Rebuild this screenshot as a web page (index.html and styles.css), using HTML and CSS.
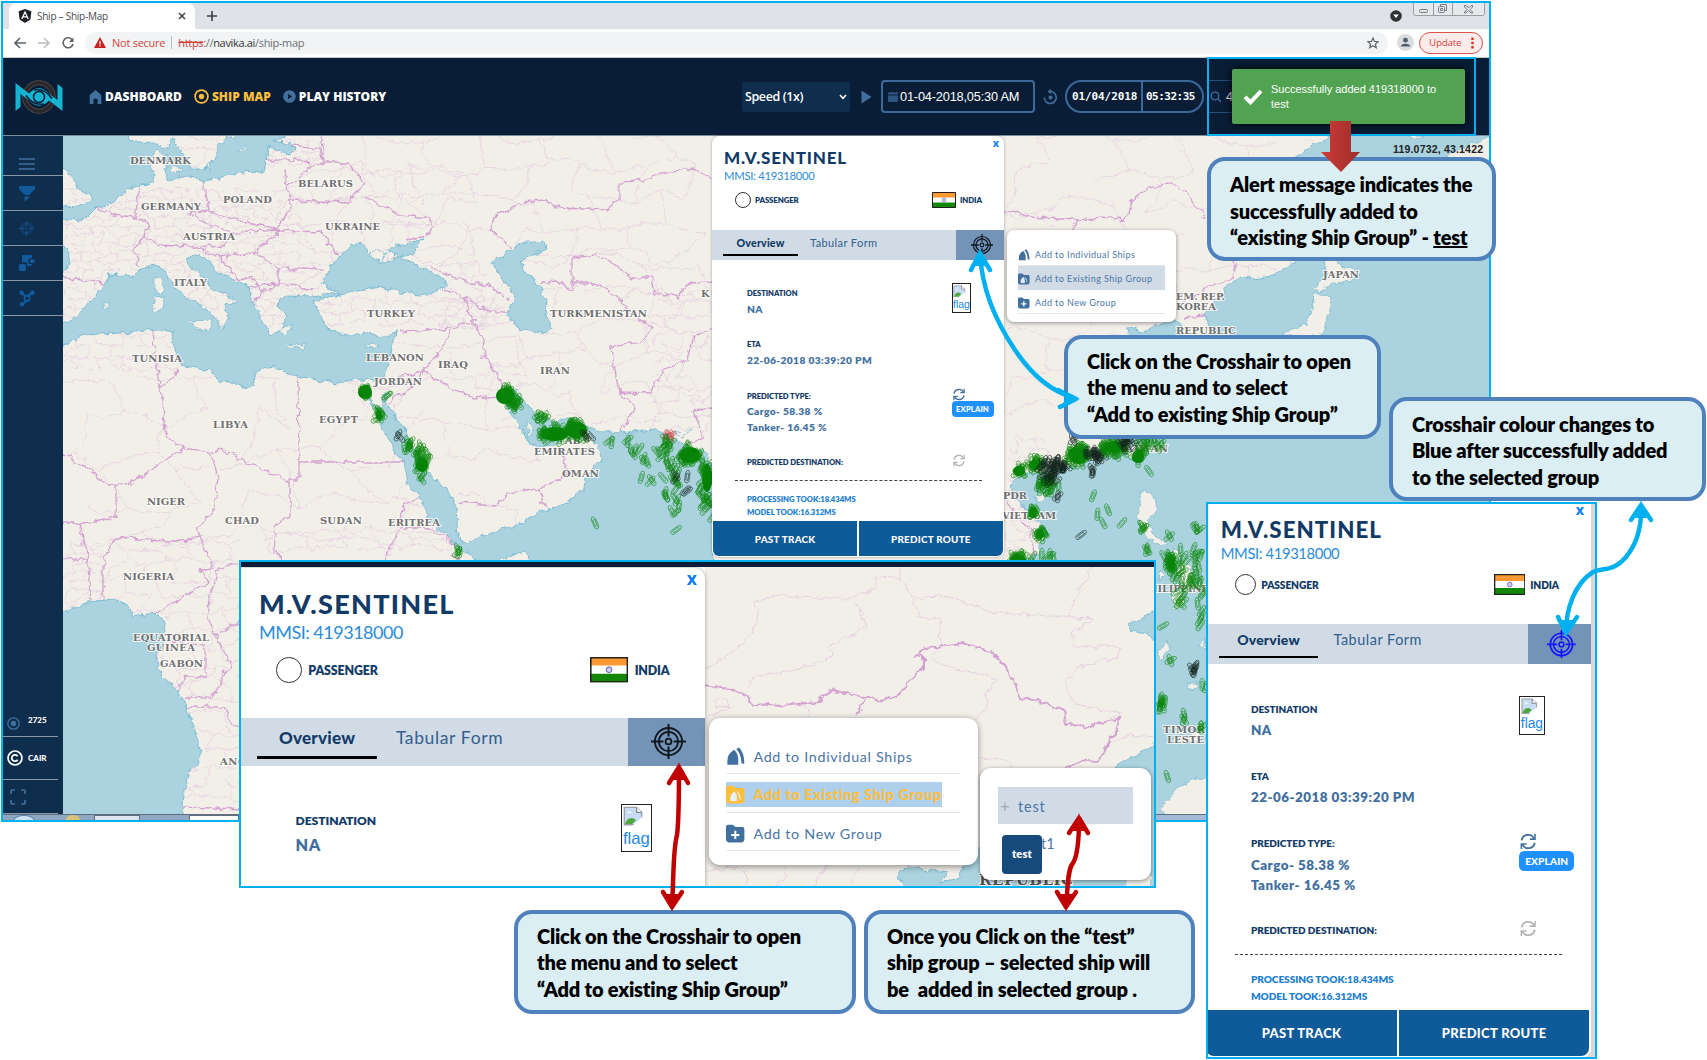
FILE: index.html
```html
<!DOCTYPE html>
<html lang="en">
<head>
<meta charset="utf-8">
<title>Ship – Ship-Map</title>
<link rel="stylesheet" href="styles.css">
</head>
<body>
<svg width="0" height="0" class="defs" aria-hidden="true">
  <defs>
    <filter id="rough" x="0" y="0" width="100%" height="100%"><feTurbulence type="fractalNoise" baseFrequency="0.12" numOctaves="3" seed="4"/><feDisplacementMap in="SourceGraphic" scale="8" xChannelSelector="R" yChannelSelector="G"/></filter>
    <path id="ship" d="M-2.6 -4.5 L-1 -7.5 H1 L2.6 -4.5 V5 L1.4 7 H-1.4 L-2.6 5Z M-1.2 -4 H1.2 V4 H-1.2Z"/>
    <symbol id="crosshair" viewBox="0 0 24 24"><g fill="none" stroke="currentColor" stroke-width="1.3"><circle cx="12" cy="12" r="9.3"/><circle cx="12" cy="12" r="6.6"/><circle cx="12" cy="12" r="2"/><path d="M12 0V8.5M12 15.5V24M0 12H8.5M15.5 12H24" stroke-width="1.4"/></g></symbol>
    <symbol id="refresh" viewBox="0 0 14 14"><g fill="none" stroke="currentColor" stroke-width="1.5"><path d="M1.6 6A5.4 5.4 0 0 1 11.8 4.6M12.4 8A5.4 5.4 0 0 1 2.2 9.4"/><path d="M12.6 .8V5H8.4M1.4 13.2V9H5.6" stroke-width="1.3"/></g></symbol>
    <symbol id="india" viewBox="0 0 24 16"><path fill="#fff" d="M0 0H24V16H0Z"/><path fill="#ff9933" d="M0 0H24V5.4H0Z"/><path fill="#138808" d="M0 10.6H24V16H0Z"/><circle cx="12" cy="8" r="1.8" fill="#ccccf0" stroke="#5a5ab0" stroke-width=".6"/><path d="M.5 .5H23.5V15.5H.5Z" fill="none" stroke="#222"/></symbol>
    <symbol id="broken" viewBox="0 0 16 16"><path d="M1 1H10.5L14.5 5V14.5H1Z" fill="#c9dcf5" stroke="#9aa0a6"/><path d="M10.5 1V5H14.5" fill="#fff" stroke="#888"/><path d="M1.5 14C3 9 7 8 10 11L7 14Z" fill="#4ea83c"/><path d="M7 15.5L15.5 8V15.5Z" fill="#fff"/><path d="M3 5.5Q5 3 7 5.5Z" fill="#fff"/></symbol>
    <symbol id="ships" viewBox="0 0 14 14"><path d="M1 13V10Q1 5 6 2Q9 5 9 9V13Z"/><path d="M7.5 1.5Q11 5 11.4 12L13.4 12.4Q13.5 4 9.6 .4Z"/></symbol>
    <symbol id="folder-ships" viewBox="0 0 14 14"><path d="M0 2Q0 .5 1.5 .5H5L7 2.2H12Q13.5 2.2 13.5 4V11Q13.5 13.5 11 13.5H2.5Q0 13.5 0 11Z"/><path d="M3.4 11.5V9Q4 6.500 6 5Q7.800 6.500 7.800 9V11.500ZM8 4.600Q10.600 7 10.600 11" fill="#e9eff6" stroke="#e9eff6" stroke-width=".6"/></symbol>
    <symbol id="folder-plus" viewBox="0 0 14 14"><path d="M0 2Q0 .5 1.5 .5H5L7 2.2H12Q13.5 2.2 13.5 4V11Q13.5 13.5 11 13.5H2.5Q0 13.5 0 11Z"/><path d="M6.8 5V11M3.8 8H9.8" stroke="#fff" stroke-width="1.5"/></symbol>
  </defs>
</svg>

<main class="board">
  <section class="window browser">
    <div class="tabs">
      <div class="tab">
        <svg width="14" height="14" viewBox="0 0 14 14"><path d="M7 0L13.4 2.3L12.4 10.6L7 14L1.6 10.6L.6 2.3Z" fill="#1c1f24"/><path d="M3.8 10L7 3L10.2 10M5 7.8H9" fill="none" stroke="#fff" stroke-width="1.3"/></svg>
        <span>Ship – Ship-Map</span>
        <svg width="8" height="8" viewBox="0 0 8 8"><path d="M1 1L7 7M7 1L1 7" stroke="#3c4043" stroke-width="1.5"/></svg>
      </div>
      <svg class="plus" width="10" height="10" viewBox="0 0 10 10"><path d="M5 0V10M0 5H10" stroke="#3c4043" stroke-width="1.6"/></svg>
      <svg class="guest" width="12" height="12" viewBox="0 0 12 12"><circle cx="6" cy="6" r="5.8" fill="#303134"/><path d="M3.2 4.5H8.8L6 8Z" fill="#fff"/></svg>
      <svg class="winctl" width="72" height="13" viewBox="0 0 72 13"><path d="M.5 0V10.5Q.5 12.5 2.5 12.5H69.5Q71.5 12.5 71.5 10.5V0M20.5 0V12.5M39.5 0V12.5" fill="#e6e8ec" stroke="#9a9da3"/><g fill="none" stroke="#777b82"><rect x="6.500" y="6.500" width="8" height="3" rx="1"/><rect x="25.500" y="3.500" width="6" height="6" rx="1"/><path d="M27.500 3V1.500H33.500V7.500H32M27.500 5.500H29.500V7.500H27.500Z"/><path d="M51.500 2.500L53 2.500L55.500 5L58 2.500H59.500V4L57 6.500L59.500 9V10H58L55.500 7.500L53 10H51.500V9L54 6.500L51.500 4Z"/></g></svg>
    </div>
    <div class="toolbar">
      <svg width="12" height="12" viewBox="0 0 12 12"><path d="M12 6H1.500M6 1L1 6L6 11" fill="none" stroke="#5f6368" stroke-width="1.600"/></svg>
      <svg width="12" height="12" viewBox="0 0 12 12"><path d="M0 6H10.500M6 1L11 6L6 11" fill="none" stroke="#babcbe" stroke-width="1.500"/></svg>
      <svg width="12" height="12" viewBox="0 0 12 12"><path d="M10.300 3A5 5 0 1 0 11 7" fill="none" stroke="#5f6368" stroke-width="1.600"/><path d="M11.500 .5V5H7Z" fill="#5f6368"/></svg>
      <div class="omnibox">
        <svg width="12" height="11" viewBox="0 0 12 11"><path d="M6 0L12 11H0Z" fill="#c5221f"/><path d="M6 4V7.500M6 8.300V9.600" stroke="#fff" stroke-width="1.200"/></svg>
        <span class="warn">Not secure</span>
        <span class="url"><s>https</s>://<b>navika.ai</b>/ship-map</span>
        <svg class="star" width="12" height="12" viewBox="0 0 12 12"><path d="M6 1L7.500 4.400L11.200 4.700L8.400 7.100L9.300 10.800L6 8.800L2.700 10.800L3.600 7.100L.8 4.700L4.500 4.400Z" fill="none" stroke="#5f6368" stroke-width="1.200"/></svg>
      </div>
      <svg class="profile" width="17" height="17" viewBox="0 0 17 17"><circle cx="8.500" cy="8.500" r="8.500" fill="#dadce0"/><circle cx="8.500" cy="6.200" r="2.400" fill="#505a6b"/><path d="M3.800 12.600Q4 9.700 8.500 9.700Q13 9.700 13.200 12.600Z" fill="#505a6b"/></svg>
      <div class="update"><span>Update</span><svg width="3" height="12" viewBox="0 0 3 12"><path d="M.3 .5H2.700V2.900H.3ZM.3 4.800H2.700V7.200H.3ZM.3 9.100H2.700V11.500H.3Z" fill="#d93025"/></svg></div>
    </div>

    <header class="appbar">
      <svg class="logo" width="48" height="34" viewBox="0 0 48 34"><g fill="none"><circle cx="24" cy="17" r="14.200" stroke="#57514f" stroke-width="5"/><circle cx="24" cy="17" r="14.200" stroke="#2b2729" stroke-width="3.600"/></g><path d="M.5 3L14 13.500Q24 3 34.500 14L42.500 20V4L47.500 8V31L34 20.500Q24 31 13.500 20L5.500 14V27L.5 31Z" fill="#14b4d2"/><path d="M11 15.500Q18 26 29 24M37 18.500Q30 8 19 10" fill="none" stroke="#091e36" stroke-width="1.500"/><circle cx="24" cy="17" r="5.500" fill="none" stroke="#091e36" stroke-width="1.500"/><circle cx="24" cy="17" r="2.800" fill="#14b4d2"/></svg>
      <nav>
        <a><svg width="13" height="14" viewBox="0 0 13 14"><path d="M6.500 0L12.300 5V14H8.600V9.500Q6.500 7.500 4.400 9.500V14H.7V5Z" fill="#41709f"/></svg><span>DASHBOARD</span></a>
        <a class="on"><svg width="15" height="15" viewBox="0 0 15 15"><circle cx="7.500" cy="7.500" r="6.400" fill="none" stroke="#fdbe3c" stroke-width="1.700"/><circle cx="7.500" cy="7.500" r="2.700" fill="#fdbe3c"/></svg><span>SHIP MAP</span></a>
        <a><svg width="13" height="13" viewBox="0 0 13 13"><circle cx="6.500" cy="6.500" r="6.300" fill="#41709f"/><path d="M5 3.700L9.200 6.500L5 9.300Z" fill="#091e36"/></svg><span>PLAY HISTORY</span></a>
      </nav>
      <div class="speed"><span>Speed (1x)</span><svg width="8" height="6" viewBox="0 0 8 6"><path d="M1 1L4 4.300L7 1" fill="none" stroke="#fff" stroke-width="1.600"/></svg></div>
      <svg class="play" width="11" height="14" viewBox="0 0 11 14"><path d="M.5 .5L10.500 7L.5 13.500Z" fill="#41709f"/></svg>
      <div class="date"><svg width="10" height="11" viewBox="0 0 10 11"><rect y="1" width="10" height="10" rx="1.500" fill="#2d5581"/><path d="M0 4H10M3 0V2M7 0V2" stroke="#091e36"/></svg><span>01-04-2018,05:30 AM</span></div>
      <svg class="history" width="15" height="16" viewBox="0 0 15 16"><path d="M6.500 2.500A6 6 0 1 1 1.300 8.500" fill="none" stroke="#41709f" stroke-width="1.600"/><path d="M8 0V5L4.500 2.500Z" fill="#41709f"/><circle cx="7.500" cy="8.500" r="2" fill="#41709f"/></svg>
      <div class="clock"><span>01/04/2018</span><span>05:32:35</span></div>
      <div class="search"><svg width="12" height="12" viewBox="0 0 12 12"><circle cx="5" cy="5" r="3.800" fill="none" stroke="#41709f" stroke-width="1.300"/><path d="M8 8L11 11" stroke="#41709f" stroke-width="1.300"/></svg><span>4</span></div>
    </header>

    <div class="work">
      <aside class="side">
        <div class="cell first"><svg width="16" height="12" viewBox="0 0 16 12"><path d="M0 1H16M0 6H16M0 11H16" stroke="#41709f" stroke-width="1.500"/></svg></div>
        <div class="cell"><svg width="16" height="16" viewBox="0 0 16 16" fill="#125a9b"><path d="M0 1H16V4L10.500 9.500V10H5.500V9.500L0 4ZM5.500 11.500H10.500V12.500L6.500 16H5.500Z"/></svg></div>
        <div class="cell faded"><svg width="15" height="15"><use href="#crosshair"/></svg></div>
        <div class="cell"><svg width="16" height="16" viewBox="0 0 16 16" fill="#125a9b"><rect x="0" y="9" width="7" height="7" rx="1.500"/><path d="M3 1Q3 0 4 0H12Q13 0 13 1V3.500H10.500Q9.500 3.500 9.500 5V8Q9.500 9 10.500 9H13Q13 11 11.500 11H8V8.500Q8 7.500 7 7.500H3Z"/><rect x="11" y="4.500" width="4.500" height="3.500" rx="1"/></svg></div>
        <div class="cell"><svg width="16" height="17" viewBox="0 0 16 17"><path d="M3 3L7 7L13 3M7.500 7.500V11L3 14.500" fill="none" stroke="#125a9b" stroke-width="2.200"/><g fill="#125a9b"><circle cx="2.500" cy="2.800" r="2.300"/><circle cx="13.500" cy="2.800" r="2.300"/><circle cx="3" cy="14.300" r="2.300"/></g><circle cx="8" cy="8.500" r="2.600" fill="#0f2d4d" stroke="#125a9b" stroke-width="1.800"/></svg></div>
        <div class="spacer"></div>
        <div class="foot count"><svg width="13" height="13" viewBox="0 0 13 13"><circle cx="6.500" cy="6.500" r="5.700" fill="none" stroke="#41709f" stroke-width="1.300"/><circle cx="6.500" cy="6.500" r="2.700" fill="#41709f"/></svg><span>2725</span></div>
        <div class="foot cair"><svg width="16" height="16" viewBox="0 0 16 16"><circle cx="8" cy="8" r="7" fill="none" stroke="#fff" stroke-width="1.700"/><path d="M10.600 6.200A3.200 3.200 0 1 0 10.600 9.800" fill="none" stroke="#fff" stroke-width="1.800"/></svg><span>CAIR</span></div>
        <div class="foot full"><svg width="16" height="16" viewBox="0 0 16 16"><path d="M1 5V2Q1 1 2 1H5M11 1H14Q15 1 15 2V5M15 11V14Q15 15 14 15H11M5 15H2Q1 15 1 14V11" fill="none" stroke="#41709f" stroke-width="1.700"/></svg></div>
      </aside>
      <div class="map">
        <svg id="world" width="1426" height="678" viewBox="63 136 1426 678">
          <g filter="url(#rough)">
            <rect x="43" y="116" width="1466" height="718" fill="#f2efe9"/>
            <path id="mesh" class="minor"/>
            <g class="major">
              <path d="M204 182L209 210L189 213L210 225L233 233L225 245L198 247L160 245L145 237L133 247L140 267M140 187L136 200L135 217L149 223L145 237M209 210L225 217L251 223L276 230L291 207L287 187L284 168M265 160L302 160L313 165L287 187M290 145L320 148L324 163L349 163L365 183L349 202L287 200M313 165L324 163M365 197L385 207L400 215L431 218L431 235L407 240M233 233L280 230L320 232L340 257M254 253L280 230M280 268L323 270M254 253L280 268L278 283L313 290M262 293L278 283L249 287M262 293L254 302M218 257L240 280L254 277L262 293M198 247L218 257L254 253M324 163L322 136M95 208L113 215L135 217M63 277L85 280L104 283"/>
              <path d="M511 247L491 230L494 217L523 202L545 200L560 208L607 210L619 200V182L651 180L659 173L694 168L714 180M431 267L469 283L489 285L509 300M445 290L465 297L469 313L476 328L485 340L483 357L502 380V397L473 399L422 372L396 377M400 332L451 328L476 320M451 328L443 348L422 372L413 387L396 397L385 410M465 297L490 312L509 312M540 283L560 282L572 290V258L596 255L619 267L631 277H651L655 293L679 298L686 283L714 282M572 283H596L619 297L631 313L651 328L643 342L611 347L619 393L635 407L621 433M619 392L651 393L663 370L687 360L694 337L714 327M714 408L692 410L704 437L683 445M460 502L494 505L509 493L538 488L567 477L563 453M538 488L545 508"/>
              <path d="M298 377L299 462H403M299 462V479H290V517L276 523L274 553L284 561M290 483L220 449L211 453L184 448L167 437L160 390L180 370M160 390L151 325M184 448L131 483L109 487L87 468L63 453M116 487V517L84 523H63M211 453L218 477L214 507L198 530L200 537L169 542L116 537L109 550L103 558V600M80 523L87 558L91 600M63 559H88M200 537L214 567L200 570L209 583L182 597L156 613M418 498L403 505L400 528L389 550L385 562M403 528H429L451 542L458 546M187 698L209 697L218 690L225 673L231 667L218 640L207 617L209 600L218 570L240 562M169 642L205 645V677L185 677L178 690M187 707H224L233 727H245M182 807L240 809M218 635L240 620M451 555L460 560"/>
              <path d="M1005 210L1030 217L1078 220L1102 217L1125 220L1133 200L1149 187L1169 183L1187 193L1204 217M1210 240L1235 263L1233 277L1204 290L1180 305M1078 220L1070 235M1004 495L1015 515L1030 530L1035 560M1185 318L1212 315"/>
            </g>
            <g class="sea">
              <path d="M40 100H127V135L135 143L152 142L165 148L172 138L180 148L186 160L191 168L205 168L216 158L219 146L228 138L235 135V100H284V137L272 141L290 142L295 150L290 155L276 150L268 147L266 160L264 172L240 173L215 180L204 182L190 176L178 178L167 180L166 168L167 155L158 149L152 156L150 166L155 174L154 183L140 184L128 190L119 196L113 203L95 208L85 218L70 220L40 220V208L80 206L92 201L93 193L82 192L74 180L66 168L40 160Z"/>
              <path d="M40 245H66L69 255L66 272L40 275Z"/>
              <path d="M40 345L63 345L84 335L120 333L156 330L174 330L171 340L176 352L181 365L195 368L211 371L218 380L235 384L247 388L256 383L255 374L273 366L287 373L302 378L320 380L336 384L356 379L374 382L385 377L391 353L396 332L385 337L364 332L349 337L327 328L320 315L314 302L322 298L340 295L330 292L313 296L287 295L279 299L277 307L287 317L282 328L272 335L265 328L258 312L251 300L249 287L236 280L218 272L204 257L198 254L187 257L190 268L204 277L213 289L231 297L238 305L228 302L225 309L230 318L221 329L214 318L200 306L187 298L174 287L165 270L156 265L145 267L134 276L108 274L105 283L92 300L76 317L40 333Z"/>
              <path d="M323 283L329 267L340 257L349 247L360 243L370 252L378 262L390 260L398 257L386 250L403 243L423 240L411 255L400 257L423 268L445 280V288L429 295L400 292L382 287L364 290L338 294Z"/>
              <path d="M491 263L509 250L523 242H545L547 248L527 257L520 263L531 277L542 290L546 300L545 312L553 330L538 333L520 328L509 320V310L514 297L502 277Z"/>
              <path d="M367 398L374 408L380 423L393 447L403 463L407 483L422 500L429 520L447 537L461 548L476 560L496 561L527 552L529 590H714V470L706 453L690 447L679 443L671 435L655 430L619 433L596 430L576 420L549 420L534 413L523 400L516 388L507 395L508 410L523 427L525 437L538 447L556 445L566 438L580 434L588 430L596 445L603 458L588 473L584 490L570 500L538 513L523 523L491 533L463 544L458 537L456 507L447 490L425 470L414 447L403 427L389 408L384 403L389 392L386 390L382 400L380 408Z"/>
              <path d="M40 615L64 612L89 602L113 599L125 603L133 617L156 613L165 622L163 640L156 660L160 673L178 690L187 707L196 732L200 750L198 763L189 773L184 790L182 840H40Z"/>
              <path d="M1520 100H1331V137L1312 146L1295 158L1290 200L1320 240L1297 262L1273 275L1252 278L1240 277L1228 285L1221 297L1213 303L1205 315L1212 335L1205 360L1185 350L1180 335L1182 322L1170 318L1155 327L1140 333L1126 325L1128 340L1150 380L1145 420L1128 440L1100 458L1078 466L1050 470L1034 474L1019 475L1010 482L1012 495L1026 510L1040 523L1044 537L1038 553L1018 562L1005 575V840H1520Z"/>
            </g>
            <g class="land">
              <path d="M156 278L161 280L162 290L158 294L155 286ZM154 297L163 296L162 311L155 313ZM190 321L213 320L209 331L196 327ZM287 343L307 345L306 348L288 346ZM365 346L378 345L372 350ZM172 165L182 168L178 174L171 171ZM207 164L211 160L209 170ZM238 152L245 146L244 151ZM278 330L292 325L286 336Z"/>
              <path d="M526 424L531 426L531 436L528 438ZM372 250L386 254L381 261L374 260ZM674 432L690 431L684 438ZM102 304H109V308L102 307Z"/>
              <path d="M1324 262H1335L1359 275L1345 283L1334 282L1322 291L1312 288L1328 276ZM1316 293L1329 297L1331 310L1325 325L1322 336L1280 336L1292 328L1307 325L1312 305ZM1275 338L1285 337L1282 350H1273ZM1440 160L1455 152L1492 135V160ZM1407 130L1425 137H1412Z"/>
              <path d="M1141 492L1153 493L1157 507L1149 520L1153 533L1168 545L1160 545L1145 538L1139 520L1138 507ZM1129 450L1138 443L1135 460L1129 458ZM1034 495L1044 492L1046 500L1037 503ZM1172 548L1180 553L1175 560ZM1180 560L1190 565L1194 583L1185 592L1178 580ZM1170 592L1182 590L1184 606L1174 610ZM1160 570L1165 578L1158 580ZM1187 683L1198 683V689L1189 690ZM1172 738L1200 732L1206 738L1180 745ZM1158 650L1168 640L1170 650L1160 660ZM1163 840V806L1177 787L1196 777L1210 780V840ZM1200 645L1206 640V650Z"/>
            </g>
          </g>
          <g class="names">
            <text x="130" y="164" textLength="61">DENMARK</text><text x="141" y="210" textLength="60">GERMANY</text><text x="223" y="203" textLength="49">POLAND</text><text x="298" y="187" textLength="55">BELARUS</text><text x="325" y="230" textLength="55">UKRAINE</text><text x="183" y="240" textLength="52">AUSTRIA</text><text x="174" y="286" textLength="33">ITALY</text><text x="367" y="317" textLength="48">TURKEY</text><text x="550" y="317" textLength="97">TURKMENISTAN</text>
            <text x="132" y="362" textLength="50">TUNISIA</text><text x="366" y="361" textLength="58">LEBANON</text><text x="438" y="368" textLength="30">IRAQ</text><text x="540" y="374" textLength="30">IRAN</text><text x="374" y="385" textLength="48">JORDAN</text><text x="213" y="428" textLength="35">LIBYA</text><text x="319" y="423" textLength="39">EGYPT</text><text x="565" y="444" textLength="16">AB</text><text x="534" y="455" textLength="61">EMIRATES</text><text x="562" y="477" textLength="37">OMAN</text>
            <text x="147" y="505" textLength="38">NIGER</text><text x="225" y="524" textLength="34">CHAD</text><text x="320" y="524" textLength="42">SUDAN</text><text x="388" y="526" textLength="52">ERITREA</text><text x="123" y="580" textLength="51">NIGERIA</text><text x="133" y="641" textLength="76">EQUATORIAL</text><text x="147" y="651" textLength="48">GUINEA</text><text x="160" y="667" textLength="43">GABON</text><text x="220" y="765" textLength="52">ANGOLA</text>
            <text x="1323" y="278" textLength="36">JAPAN</text><text x="1176" y="300" textLength="49">EM. REP.</text><text x="1176" y="310" textLength="40">KOREA</text><text x="1176" y="334" textLength="60">REPUBLIC</text><text x="1118" y="452" textLength="50">TAIWAN</text><text x="1003" y="499" textLength="24">PDR</text><text x="1002" y="519" textLength="54">VIETNAM</text><text x="1141" y="592" textLength="75">PHILIPPINES</text><text x="1163" y="733" textLength="42">TIMOR</text><text x="1167" y="743" textLength="37">LESTE</text><text x="701" y="297">K</text>
          </g>
          <g id="fleet" class="ships"></g>
          <text class="coords" x="1393" y="153" textLength="90">119.0732, 43.1422</text>
        </svg>
      </div>
    </div>
    <div class="taskbar"><i class="orb"></i><i class="ico"></i><i class="task"></i><i class="task two"></i></div>
  </section>

  <div class="card place-a">
    <div class="card-head">
      <div class="close">x</div><h2>M.V.SENTINEL</h2><p class="mmsi">MMSI: 419318000</p>
      <div class="who"><i></i><span>PASSENGER</span><svg width="24" height="16"><use href="#india"/></svg><span class="nation">INDIA</span></div>
    </div>
    <div class="card-tabs"><b>Overview</b><span>Tabular Form</span><div class="aim"><svg width="22" height="22"><use href="#crosshair"/></svg></div></div>
    <div class="card-body">
      <div class="sec"><div><h3>DESTINATION</h3><p>NA</p></div><div class="noimg"><svg width="13" height="13"><use href="#broken"/></svg>flag</div></div>
      <div class="sec"><div><h3>ETA</h3><p>22-06-2018 03:39:20 PM</p></div></div>
      <div class="sec type"><div><h3>PREDICTED TYPE:</h3><p>Cargo- 58.38 %</p><p>Tanker- 16.45 %</p></div><div class="act"><svg width="14" height="13"><use href="#refresh"/></svg><button>EXPLAIN</button></div></div>
      <div class="sec dest"><div><h3>PREDICTED DESTINATION:</h3></div><div class="act off"><svg width="14" height="13"><use href="#refresh"/></svg></div></div>
      <div class="took">PROCESSING TOOK:18.434MS<br>MODEL TOOK:16.312MS</div>
    </div>
    <div class="card-foot"><span>PAST TRACK</span><span>PREDICT ROUTE</span></div>
  </div>

  <div class="menu place-menu">
    <div class="item"><svg width="12" height="12"><use href="#ships"/></svg>Add to Individual Ships</div>
    <div class="item hover"><svg width="12" height="12"><use href="#folder-ships"/></svg>Add to Existing Ship Group</div>
    <div class="item"><svg width="12" height="12"><use href="#folder-plus"/></svg>Add to New Group</div>
  </div>

  <section class="window alert">
    <div class="toast"><svg width="20" height="16" viewBox="0 0 20 16"><path d="M2 8L7.500 13.300L18 2" fill="none" stroke="#fff" stroke-width="4"/></svg><span>Successfully added 419318000 to test</span></div>
  </section>

  <section class="window detail">
    <svg class="region" width="449" height="319" viewBox="705 567 449 319">
      <g filter="url(#rough)">
        <rect x="685" y="547" width="489" height="359" fill="#f2efe9"/>
        <path class="minor wide" d="M706 668L730 655L754 633L758 613L754 603L773 595L813 598H853L860 610L868 627L845 637L829 647L832 655L813 665L781 672L754 677L748 687M898 560L900 578L876 577V588L853 598M900 578L912 597L955 598L991 613L1034 615L1068 617L1078 592L1098 560M1068 617L1094 618L1070 633L1074 647H1121L1117 658L1078 667L1064 683L1074 703L1120 715M912 597L920 617L940 620L941 647L930 658L955 670L975 672L997 680L987 693V707L975 720M805 702L809 717M716 699L726 698L729 707L716 708ZM1110 742L1135 735L1155 737M978 758L1005 760L1015 768M700 720L735 706M733 866L745 872L746 886M787 866L785 878L775 886M826 866L815 886M860 866L850 886M705 870L735 868"/>
        <path class="major wide" d="M700 686L730 689L742 694L754 704L781 706L817 702L833 690L851 695L866 696L882 701L902 694L906 683L924 667V657L914 656L926 648L961 644L991 651L1005 665L1015 683L1021 698L1044 702L1064 710L1066 725L1090 726L1120 717L1118 730L1110 740L1104 753L1096 763L1080 761L1066 767M866 696L855 717"/>
        <g class="sea"><path d="M1127 625L1153 612L1180 608V660L1150 636L1132 630ZM898 872L908 867L949 872L940 883L959 877L967 862L985 840L1155 745H1180V910H920L902 882Z"/></g>
        <path d="M1040 886L1060 862L1075 890ZM1128 880L1150 870V890H1125Z" fill="#f2efe9"/>
      </g>
      <g class="names big"><text x="979" y="885" textLength="94">REPUBLIC</text></g>
    </svg>
    <div class="card zoomed">
      <div class="card-head">
        <div class="close">x</div><h2>M.V.SENTINEL</h2><p class="mmsi">MMSI: 419318000</p>
        <div class="who"><i></i><span>PASSENGER</span><svg width="24" height="16"><use href="#india"/></svg><span class="nation">INDIA</span></div>
      </div>
      <div class="card-tabs"><b>Overview</b><span>Tabular Form</span><div class="aim"><svg width="22" height="22"><use href="#crosshair"/></svg></div></div>
      <div class="card-body"><div class="sec"><div><h3>DESTINATION</h3><p>NA</p></div><div class="noimg"><svg width="13" height="13"><use href="#broken"/></svg>flag</div></div></div>
    </div>
    <div class="menu big-menu">
      <div class="item"><svg width="12" height="12"><use href="#ships"/></svg>Add to Individual Ships</div>
      <div class="item picked"><mark><svg width="12" height="12"><use href="#folder-ships"/></svg>Add to Existing Ship Group</mark></div>
      <div class="item"><svg width="12" height="12"><use href="#folder-plus"/></svg>Add to New Group</div>
    </div>
    <div class="submenu">
      <div class="row on"><i>+</i>test</div>
      <div class="row second"><span>t1</span></div>
      <div class="tip">test</div>
    </div>
  </section>

  <section class="window result">
    <div class="card enlarged">
      <div class="card-head">
        <div class="close">x</div><h2>M.V.SENTINEL</h2><p class="mmsi">MMSI: 419318000</p>
        <div class="who"><i></i><span>PASSENGER</span><svg width="24" height="16"><use href="#india"/></svg><span class="nation">INDIA</span></div>
      </div>
      <div class="card-tabs"><b>Overview</b><span>Tabular Form</span><div class="aim blue"><svg width="22" height="22"><use href="#crosshair"/></svg></div></div>
      <div class="card-body">
        <div class="sec"><div><h3>DESTINATION</h3><p>NA</p></div><div class="noimg"><svg width="13" height="13"><use href="#broken"/></svg>flag</div></div>
        <div class="sec"><div><h3>ETA</h3><p>22-06-2018 03:39:20 PM</p></div></div>
        <div class="sec type"><div><h3>PREDICTED TYPE:</h3><p>Cargo- 58.38 %</p><p>Tanker- 16.45 %</p></div><div class="act"><svg width="14" height="13"><use href="#refresh"/></svg><button>EXPLAIN</button></div></div>
        <div class="sec dest"><div><h3>PREDICTED DESTINATION:</h3></div><div class="act off"><svg width="14" height="13"><use href="#refresh"/></svg></div></div>
        <div class="took">PROCESSING TOOK:18.434MS<br>MODEL TOOK:16.312MS</div>
      </div>
      <div class="card-foot"><span>PAST TRACK</span><span>PREDICT ROUTE</span></div>
    </div>
  </section>

  <div class="note n1">Alert message indicates the<br>successfully added to<br>“existing Ship Group” - <u>test</u></div>
  <div class="note n2">Click on the Crosshair to open<br>the menu and to select<br>“Add to existing Ship Group”</div>
  <div class="note n3">Crosshair colour changes to<br>Blue after successfully added<br>to the selected group</div>
  <div class="note n4">Click on the Crosshair to open<br>the menu and to select<br>“Add to existing Ship Group”</div>
  <div class="note n5">Once you Click on the “test”<br>ship group – selected ship will<br>be &nbsp;added in selected group .</div>

  <svg class="arrows" width="1707" height="1060" viewBox="0 0 1707 1060">
    <defs><linearGradient id="red" x1="0" x2="1"><stop offset="0" stop-color="#ce3b37"/><stop offset="1" stop-color="#9b2d2a"/></linearGradient></defs>
    <path d="M1330 121H1351V152H1360L1341 172L1321 152H1330Z" fill="url(#red)"/>
    <g fill="none" stroke="#00b0f0" stroke-width="4.500" stroke-linecap="round" stroke-linejoin="round">
      <path d="M980 254C982 290 996 322 1015 350C1034 378 1052 391 1074 398"/><path d="M971 270L980 253L990 270M1058 390L1076 399L1060 407"/>
      <path d="M1641 506C1642 530 1636 545 1626 557C1612 573 1602 567 1593 572C1574 584 1566 610 1566 632"/><path d="M1631 520L1641 505L1651 520M1558 617L1566 633L1577 617"/>
    </g>
    <g fill="#00b0f0"><path d="M980 248L986 266H974ZM1080 399L1063 405L1066 392ZM1641 500L1647 518H1635ZM1566 638L1560 620H1573Z"/></g>
    <g fill="none" stroke="#c00000" stroke-width="4.500" stroke-linecap="round" stroke-linejoin="round">
      <path d="M679 768C679 800 679 820 677 835C673 850 674 870 672 906"/><path d="M669 783L679 767L688 783M663 892L672 907L682 892"/>
      <path d="M1079 819C1079 840 1078 855 1073 863C1067 870 1068 890 1066 906"/><path d="M1069 833L1079 818L1088 833M1057 892L1066 907L1076 892"/>
    </g>
    <g fill="#c00000"><path d="M679 762L685 780H673ZM672 912L666 894H678ZM1079 813L1085 831H1073ZM1066 912L1060 894H1072Z"/></g>
  </svg>
</main>
<script src="map.js"></script>
</body>
</html>
```
FILE: styles.css
```css
* { box-sizing: border-box; }
body { margin: 0; background: #fff; font-family: "Lato", "Open Sans", sans-serif; }
h2, h3, p { margin: 0; }
svg { display: block; flex: none; }
.defs { position: absolute; }
.board { position: relative; width: 1707px; height: 1060px; overflow: hidden; }
.window { position: absolute; border: 2px solid #00b0f0; background: #fff; overflow: hidden; }

/* browser window */
.browser { left: 1px; top: 1px; width: 1490px; height: 821px; display: flex; flex-direction: column; font-family: "Open Sans", "Noto Sans", sans-serif; }
.tabs { height: 26px; flex: none; background: #dee1e6; display: flex; align-items: center; padding-left: 6px; }
.tab { width: 186px; height: 26px; background: #fff; border-radius: 8px 8px 0 0; display: flex; align-items: center; padding: 0 9px 0 9px; gap: 5px; font-size: 10px; color: #45494d; }
.tab span { flex: 1; letter-spacing: -.25px; }
.plus { margin-left: 12px; }
.guest { margin-left: auto; }
.winctl { margin: 0 4px 0 11px; align-self: flex-start; }
.toolbar { height: 29px; flex: none; display: flex; align-items: center; padding: 0 6px 1px 11px; gap: 12px; border-bottom: 1px solid #c9cbcf; }
.omnibox { width: 1303px; height: 22px; margin-left: -1px; border-radius: 11px; background: #f1f3f4; display: flex; align-items: center; padding: 0 9px 0 9px; font-size: 11px; color: #6a6e73; }
.warn { color: #d0453c; margin-left: 6px; padding-right: 6px; border-right: 1px solid #b9bcc0; line-height: 13px; letter-spacing: -.25px; }
.url { margin-left: 6px; letter-spacing: -.33px; }
.url s { color: #d0453c; }
.url b { font-weight: 400; color: #303134; }
.star { margin-left: auto; }
.profile { margin-left: -3px; }
.update { margin-left: -7px; width: 64px; height: 22px; flex: none; border: 1px solid #d9534f; border-radius: 11px; background: #fdecea; color: #d0453c; font-size: 9.800px; letter-spacing: -.2px; display: flex; align-items: center; justify-content: space-between; padding: 0 8px 0 9px; }

/* application bar */
.appbar { height: 78px; flex: none; background: #091e36; border-bottom: 1px solid #7f8b99; display: flex; align-items: center; color: #fff; padding: 0 0 0 12px; }
.appbar nav { display: flex; margin-left: 26px; width: 300px; gap: 12px; font: 900 12px "Open Sans", sans-serif; }
.appbar nav a { display: flex; align-items: center; gap: 3px; white-space: nowrap; }
.appbar nav .on { color: #fdbe3c; }
.speed { margin-left: 353px; width: 108px; height: 30px; border-radius: 3px; background: #0f2d4d; display: flex; align-items: center; justify-content: space-between; padding: 0 3px; font: 600 12.500px "Open Sans", sans-serif; letter-spacing: -.4px; }
.play { margin-left: 11px; }
.date { margin-left: 9px; width: 154px; height: 33px; border: 2px solid #3c689a; border-radius: 4px; display: flex; align-items: center; padding-left: 5px; gap: 2px; font: 12.800px "Liberation Sans", sans-serif; letter-spacing: -.2px; white-space: nowrap; }
.history { margin-left: 8px; }
.clock { margin-left: 7px; width: 139px; height: 33px; border: 2px solid #3c689a; border-radius: 17px; display: flex; font: 700 11px/29px "DejaVu Sans Mono", monospace; }
.clock span { white-space: nowrap; letter-spacing: -.1px; }
.clock span:first-child { width: 76px; padding-left: 5px; border-right: 2px solid #3c689a; }
.clock span:last-child { padding-left: 3px; letter-spacing: -.5px; }
.search { margin-left: 4px; width: 60px; height: 33px; border: 1px solid #2a4f78; display: flex; align-items: center; padding-left: 1px; gap: 4px; font-size: 12px; }

/* work area */
.work { height: 678px; flex: none; display: flex; }
.side { width: 60px; background: #0f2d4d; display: flex; flex-direction: column; }
.cell { height: 35px; display: flex; align-items: center; padding-left: 16px; border-bottom: 1.500px solid #8b96a3; }
.cell.first { height: 40px; padding-top: 17px; }
.faded { color: #17508a; }
.spacer { flex: 1; }
.foot { width: 55px; border-bottom: 1px solid #8b96a3; display: flex; align-items: center; color: #fff; font: 900 8px "Lato", sans-serif; }
.count { height: 26px; padding-left: 4px; gap: 8px; }
.count span { margin-top: -8px; }
.cair { height: 43px; padding-left: 4px; gap: 5px; }
.full { height: 34px; padding-left: 7px; }
.taskbar { height: 7px; flex: none; border-top: 1px solid #5f6f80; background: linear-gradient(90deg, #8fa6c2, #a9c0de); display: flex; }
.orb { width: 22px; height: 12px; margin-left: 10px; border-radius: 50%; background: #cfe4f3; border: 1px solid #4a7fae; }
.ico { width: 14px; height: 9px; margin-left: 31px; border-radius: 50%; background: #d8c27a; }
.task { width: 46px; height: 12px; margin-left: 14px; background: #dde6f0; border: 1px solid #5f6f80; }
.two { margin-left: 49px; width: 50px; background: #fff; }

/* map drawing */
.sea path { fill: #aad3df; stroke: #74b8d0; stroke-width: .9; }
.land path { fill: #f2efe9; stroke: #74b8d0; stroke-width: .7; }
.minor { fill: none; stroke: #e6d0e0; stroke-width: .8; }
.major { fill: none; stroke: #d3a2d0; stroke-width: 1.300; }
.minor.wide { stroke-width: 1; }
.major.wide { stroke-width: 2; }
.names text { font: 700 10px "DejaVu Serif", serif; fill: #70706f; stroke: #fff; stroke-opacity: .8; stroke-width: 2px; paint-order: stroke; }
.names.big text { font-size: 15px; fill: #555; }
.coords { font: 700 10.500px "Liberation Sans", sans-serif; fill: #222; }
.ships use { fill: none; stroke-width: .65; }

/* vessel card */
.card { width: 292px; height: 421px; background: #fff; border-radius: 7px; box-shadow: 0 0 3px rgba(0,0,0,.35); overflow: hidden; display: flex; flex-direction: column; color: #123a66; }
.place-a { position: absolute; left: 712px; top: 136px; }
.card-head { height: 94px; flex: none; padding: 0 12px; }
.close { height: 14px; margin-right: -7px; text-align: right; font: 700 11px/13px "Noto Sans", sans-serif; color: #0a7cf5; }
.card h2 { font-size: 17px; line-height: 16px; font-weight: 900; letter-spacing: .8px; }
.mmsi { margin-top: 3px; font-size: 11.300px; line-height: 14px; color: #2b8bd8; letter-spacing: -.3px; }
.who { margin-top: 9px; height: 16px; padding-left: 11px; display: flex; align-items: center; font-size: 7.800px; font-weight: 800; letter-spacing: -.1px; }
.who i { width: 16px; height: 16px; border: 1px solid #333; border-radius: 50%; margin-right: 4px; }
.who span { width: 177px; }
.who .nation { width: auto; margin-left: 4px; }
.card-tabs { height: 30px; flex: none; background: #d1dbe6; display: flex; padding-left: 11px; font-size: 10.700px; line-height: 25px; color: #33608f; }
.card-tabs b { width: 75px; height: 26px; border-bottom: 2px solid #000; text-align: center; color: #123a66; font-weight: 900; letter-spacing: .15px; }
.card-tabs span { margin-left: 12px; font-size: 11px; letter-spacing: .4px; }
.aim { width: 48px; margin-left: auto; background: #7394b7; display: flex; align-items: center; justify-content: center; color: #101820; }
.aim svg { margin-left: 3px; }
.blue { color: #1414ff; }
.card-body { height: 261px; flex: none; padding-top: 26px; }
.sec { display: flex; padding-left: 35px; height: 32px; margin-bottom: 19.300px; }
.sec > div:first-child { width: 204.500px; flex: none; }
.sec h3 { font-size: 7.600px; line-height: 15px; font-weight: 800; letter-spacing: -.05px; }
.sec p { font-size: 10.200px; line-height: 15.500px; font-weight: 800; color: #41709f; letter-spacing: .38px; }
.sec h3 + p { margin-top: .5px; }
.noimg { width: 19.500px; height: 30px; margin-top: -3px; border: 1px solid #222; font: 10.500px/11px "Liberation Sans", sans-serif; color: #1e88e5; display: flex; flex-direction: column; justify-content: space-between; padding: 1px 0 2px .5px; }
.type { height: 47px; margin-bottom: 19.200px; }
.act { margin-top: -.7px; color: #41709f; }
.act button { margin: .3px 0 0; width: 42px; height: 15.500px; padding: 0; border: 0; border-radius: 4px; background: #1e90ff; color: #fff; font: 900 7.700px "Lato", sans-serif; letter-spacing: .1px; display: block; }
.off { color: #b5b5b5; }
.dest { height: 15px; margin-bottom: 0; }
.took { margin: 10px 22px 0 23px; border-top: 1.500px dashed #444; padding: 12px 0 0 12px; font-size: 7.700px; line-height: 13.400px; font-weight: 800; color: #1e7fd0; letter-spacing: -.05px; }
.card-foot { height: 36px; flex: none; display: flex; gap: 1.500px; padding: 0 1px; }
.card-foot span { flex: 1; height: 35px; background: #0f5a99; color: #fff; font-size: 9.900px; font-weight: 900; line-height: 36px; text-align: center; letter-spacing: .25px; }
.card-foot span:first-child { border-radius: 0 0 0 6px; }
.card-foot span:last-child { border-radius: 0 0 6px 0; }

/* group menu */
.menu { width: 169px; height: 92px; background: #fff; border-radius: 7px; box-shadow: 0 1px 4px rgba(0,0,0,.4); padding: 11px 11px 0; color: #4a75a5; font-size: 9px; letter-spacing: .43px; }
.place-menu { position: absolute; left: 1007px; top: 230px; padding-top: 12px; }
.item { height: 24px; padding-top: 2px; display: flex; align-items: center; white-space: nowrap; gap: 5px; border-bottom: 1px solid #e4e7ea; }
.item svg { fill: #41709f; }
.item.hover { background: #d1dbe6; border-color: #d1dbe6; }

/* magnified steps */
.detail { left: 239px; top: 560px; width: 917px; height: 328px; }
.detail::before { content: ""; display: block; height: 5px; background: #091e36; }
.region { position: absolute; left: 464px; top: 5px; }
.zoomed { zoom: 1.592; margin: .8px 0 0 -.7px; position: relative; height: 210px; border-radius: 0 7px 0 0; }
.zoomed .card-body { padding-top: 27px; }
.big-menu { zoom: 1.59; position: absolute; left: 294.300px; top: 98.300px; }
.big-menu .item { height: 24.200px; padding-top: 3px; }
.item.picked { padding-top: 2px; }
.item.picked mark { background: #aed0ec; color: #fdbe3c; font-weight: 900; display: flex; align-items: center; gap: 5px; height: 15.500px; letter-spacing: .4px; }
.item.picked svg { fill: #fdbe3c; }
.submenu { position: absolute; left: 739px; top: 206px; width: 171px; height: 112px; background: #fff; border-radius: 11px; box-shadow: 0 1px 4px rgba(0,0,0,.45); padding: 19px 18px; font-size: 14.500px; letter-spacing: .8px; color: #4a75a5; }
.row { height: 37px; display: flex; align-items: center; padding: 2px 0 0 2px; }
.row.on { background: #d1dbe6; }
.row i { font-style: normal; color: #a5abb3; width: 18px; font-size: 17px; }
.second { padding-left: 43px; letter-spacing: 0; }
.tip { position: absolute; left: 22px; top: 67px; width: 40px; height: 39px; border-radius: 4px; background: #174a7c; color: #fff; font-size: 11px; font-weight: 800; line-height: 38px; letter-spacing: .2px; text-align: center; }

.result { left: 1206px; top: 502px; width: 391px; height: 557px; background: #dcd6d6; }
.enlarged { zoom: 1.312; box-shadow: none; margin: -2.300px 0 0 -2.300px; width: 294px; height: 424.500px; border-radius: 0 0 7px 7px; }
.enlarged .card-body { height: 263.800px; padding-top: 27.500px; }
.enlarged .dest { margin-top: 1px; }

.alert { left: 1207px; top: 57px; width: 269px; height: 79px; background: none; overflow: visible; padding: 10px 0 0 23px; }
.toast { width: 233px; height: 55px; border-radius: 2px; background: #51a351; box-shadow: 0 0 10px #000; display: flex; align-items: center; padding-left: 11px; gap: 8px; color: #fff; font: 11px/14.500px "Liberation Sans", sans-serif; }
.toast span { width: 175px; }

/* captions */
.note { position: absolute; height: 104px; border: 4px solid #4f81bd; border-radius: 18px; background: #daeef3; color: #000; padding: 8.500px 0 0 19px; font: 800 20px/26.700px "Lato", sans-serif; letter-spacing: -.18px; white-space: nowrap; }
.n1 { left: 1207px; top: 157px; width: 289px; padding-top: 10px; }
.n2 { left: 1064px; top: 335px; width: 317px; }
.n3 { left: 1389px; top: 397px; width: 317px; padding-top: 9.500px; }
.n4 { left: 514px; top: 910px; width: 342px; }
.n5 { left: 864px; top: 910px; width: 331px; }
.arrows { position: absolute; left: 0; top: 0; }
```
FILE: map.js
```js
// Small seeded generator so the map is drawn the same way every time.
let seed = 11;
const rnd = () => (seed = (seed * 16807) % 2147483647) / 2147483647;

// Province outlines: x0, y0, x1, y1, cell size
const provinces = [
  [63,190,300,330,9],[265,140,326,166,6],[300,265,480,335,12],[280,170,480,265,26],[326,136,712,262,30],
  [480,262,712,440,32],[396,340,540,540,40],[63,375,400,545,42],[63,335,178,372,11],
  [63,545,104,610,9],[104,545,245,814,17],[245,530,450,565,18],[170,136,235,170,14],
  [1005,136,1320,440,34],[1004,440,1050,565,10],[650,290,712,440,14],[436,300,500,330,8]
];
let d = '';
for (const [x0, y0, x1, y1, c] of provinces) {
  const nx = Math.floor((x1 - x0) / c), ny = Math.floor((y1 - y0) / c), p = [];
  for (let j = 0; j <= ny; j++) {
    p.push([]);
    for (let i = 0; i <= nx; i++) p[j].push([x0 + (i + (j % 2) * .5 + (rnd() - .5) * .6) * c, y0 + (j + (rnd() - .5) * .6) * c]);
  }
  const line = (a, b) => {
    const mx = (a[0] + b[0]) / 2 + (rnd() - .5) * c * .35, my = (a[1] + b[1]) / 2 + (rnd() - .5) * c * .35;
    d += `M${a[0].toFixed(1)} ${a[1].toFixed(1)}L${mx.toFixed(1)} ${my.toFixed(1)}L${b[0].toFixed(1)} ${b[1].toFixed(1)}`;
  };
  for (let j = 0; j <= ny; j++) for (let i = 0; i <= nx; i++) {
    if (i < nx && rnd() > .12) line(p[j][i], p[j][i + 1]);
    if (j < ny && (i + j) % 2 && rnd() > .1) line(p[j][i], p[j + 1][i]);
  }
}
document.getElementById('mesh').setAttribute('d', d);

// Vessels: x, y, spread x, spread y, count, colour
const G = '#0a850a', K = '#12241c', R = '#c44';
const fleet = [
  [365,392,3,3,14,G],[387,395,1,2,2,G],[379,415,4,6,9,G],[399,437,2,2,2,K],[408,446,5,5,8,G],[421,458,7,12,22,G],[422,477,1,3,3,G],
  [508,396,8,8,24,G],[514,402,7,7,14,G],[540,417,7,4,8,G],[556,433,16,9,30,G],[578,430,12,9,30,G],[588,436,4,2,3,K],
  [613,441,4,2,2,G],[628,440,2,2,2,G],[635,450,5,6,4,G],[648,460,5,3,3,G],[668,437,3,3,4,R],[665,450,9,12,14,G],[690,455,12,9,26,G],
  [670,475,10,14,12,G],[680,480,8,8,3,K],[672,500,8,14,8,G],[705,480,7,20,24,G],[708,510,6,14,8,G],[688,492,4,2,2,K],[640,478,2,2,1,G],[650,480,2,2,2,G],
  [595,523,0,0,1,G],[676,512,1,2,1,G],[676,530,0,0,1,G],[459,551,4,2,4,G],
  [1019,471,5,4,10,G],[1036,465,8,6,20,G],[1054,466,14,6,30,K],[1078,455,11,9,36,G],[1096,455,12,6,20,K],[1114,448,14,8,34,G],[1128,443,10,6,14,K],
  [1047,485,12,8,24,G],[1050,478,8,6,12,K],[1138,457,5,5,12,G],[1093,471,4,2,3,K],[1074,437,3,3,3,K],[1150,445,12,6,14,G],
  [1149,471,0,0,1,G],[1057,497,1,1,2,K],[1093,496,0,0,1,G],[1096,515,2,1,1,G],[1108,510,0,0,1,G],[1103,523,0,0,1,G],[1122,523,0,0,1,G],[1081,535,0,0,1,K],
  [1033,513,3,4,10,G],[1041,534,4,5,12,G],[1143,526,2,3,5,G],[1170,538,2,3,2,G],[1147,550,2,3,3,G],[1018,558,8,4,16,G],[1031,557,2,2,2,G],[1047,557,8,3,5,G],
  [1197,530,5,4,4,G],[1168,560,10,8,8,G],[1190,555,12,10,9,G],[1175,570,8,10,10,G],[1171,563,3,8,14,G],[1190,590,14,14,11,G],[1196,575,8,12,9,G],[1180,602,4,5,5,G],[1200,615,4,14,5,G],
  [1163,626,1,1,1,G],[1171,660,1,1,2,G],[1161,705,5,7,10,G],[1168,777,1,1,1,G],[1194,668,2,4,6,K],[1204,686,2,4,2,G],[1184,718,1,4,3,G],[1202,728,3,2,3,G]
];
let ships = '';
for (const [x, y, rx, ry, n, c] of fleet) for (let i = 0; i < n; i++) {
  const a = rnd() * 6.283, r = Math.sqrt(rnd());
  ships += `<use href="#ship" stroke="${c}" transform="translate(${(x + Math.cos(a) * r * rx).toFixed(1)} ${(y + Math.sin(a) * r * ry).toFixed(1)}) rotate(${Math.round(rnd() * 110 - 45)}) scale(.85)"/>`;
}
// Harbours so crowded that the hulls merge
const ports = [[365,392,7,7],[379,415,3,5],[422,465,6,7],[505,396,9,8],[555,434,13,7],[576,430,11,8],[690,455,10,8],[707,478,5,14],
  [1019,471,6,5],[1035,465,6,5],[1078,455,10,9],[1114,447,9,6],[1138,457,6,6],[1047,482,6,5],[1033,513,4,5],[1040,534,4,5],[1018,559,8,4],[1171,565,3,6]];
document.getElementById('fleet').innerHTML = ports.map(([x, y, a, b]) => `<ellipse cx="${x}" cy="${y}" rx="${a}" ry="${b}" fill="#008000"/>`).join('') + ships;
```
